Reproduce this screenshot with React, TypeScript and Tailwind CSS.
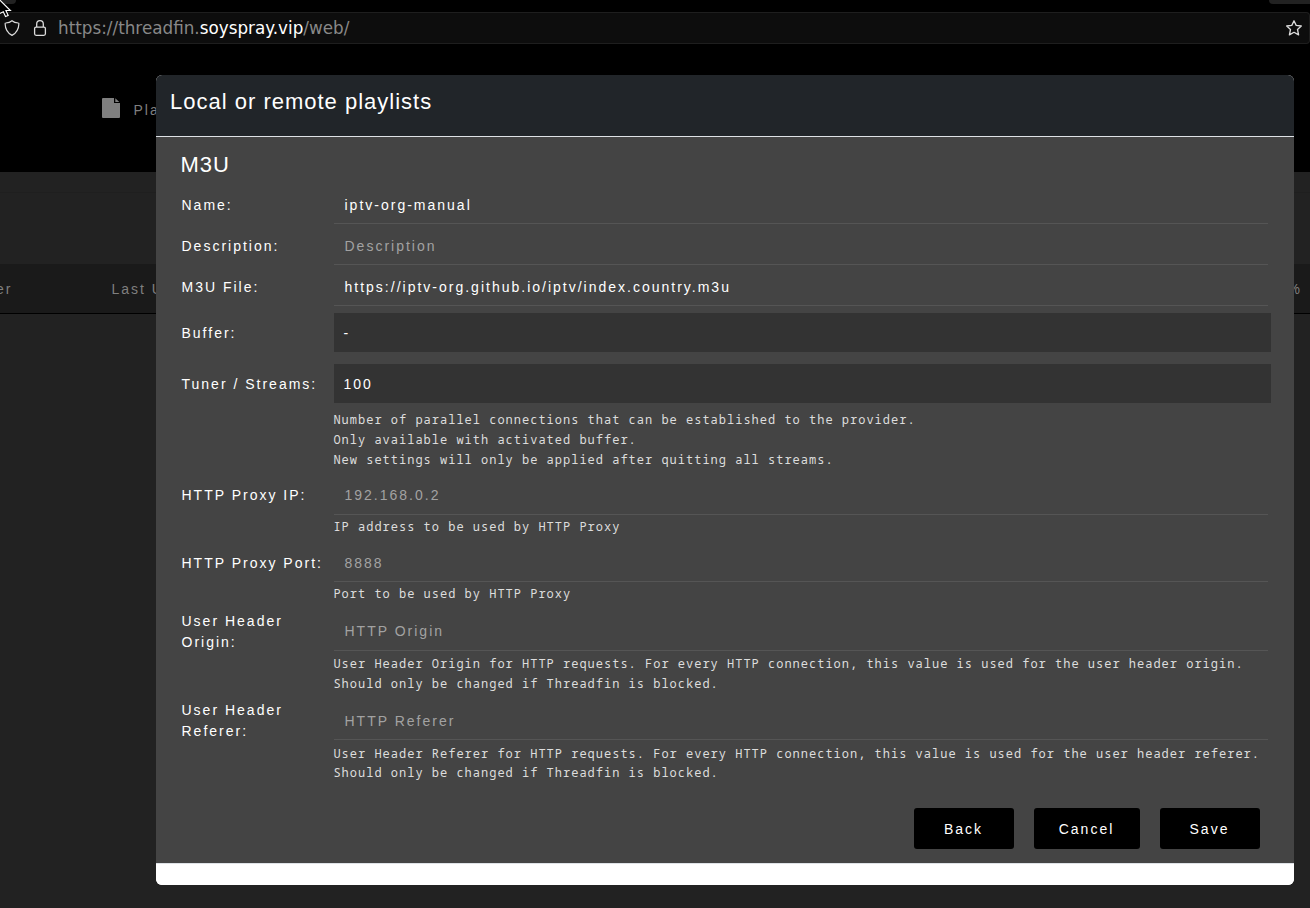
import React from "react";

type Field = {
  label: React.ReactNode;
  value?: string;
  placeholder?: string;
  select?: boolean;
  help?: string[];
  row: string;
  height: string;
  labelClass?: string;
  valueClass?: string;
  helpClass?: string;
};

const fields: Field[] = [
  { label: "Name:", value: "iptv-org-manual", row: "mt-0", height: "h-[37px]" },
  { label: "Description:", placeholder: "Description", row: "mt-1", height: "h-[37px]" },
  { label: "M3U File:", value: "https://iptv-org.github.io/iptv/index.country.m3u", row: "mt-1", height: "h-[37px]" },
  { label: "Buffer:", value: "-", select: true, row: "mt-[7px]", height: "h-[39px]", labelClass: "pt-[2px]", valueClass: "pt-[2px]" },
  {
    label: "Tuner / Streams:",
    value: "100",
    select: true,
    row: "mt-3",
    height: "h-[39px]",
    labelClass: "pt-[2px]",
    valueClass: "pt-[2px]",
    helpClass: "mt-[7px]",
    help: [
      "Number of parallel connections that can be established to the provider.",
      "Only available with activated buffer.",
      "New settings will only be applied after quitting all streams.",
    ],
  },
  {
    label: "HTTP Proxy IP:",
    placeholder: "192.168.0.2",
    row: "mt-[6px]",
    height: "h-[39px]",
    helpClass: "mt-[2px]",
    help: ["IP address to be used by HTTP Proxy"],
  },
  {
    label: "HTTP Proxy Port:",
    placeholder: "8888",
    row: "mt-[7px]",
    height: "h-[38px]",
    valueClass: "pt-[2px]",
    helpClass: "mt-[2px]",
    help: ["Port to be used by HTTP Proxy"],
  },
  {
    label: (<>User Header<br />Origin:</>),
    placeholder: "HTTP Origin",
    row: "mt-2",
    height: "h-[39px]",
    helpClass: "mt-[3px]",
    help: [
      "User Header Origin for HTTP requests. For every HTTP connection, this value is used for the user header origin.",
      "Should only be changed if Threadfin is blocked.",
    ],
  },
  {
    label: (<>User Header<br />Referer:</>),
    placeholder: "HTTP Referer",
    row: "mt-[7px]",
    height: "h-[39px]",
    valueClass: "pt-[2px]",
    helpClass: "mt-[4px] leading-[19px]",
    help: [
      "User Header Referer for HTTP requests. For every HTTP connection, this value is used for the user header referer.",
      "Should only be changed if Threadfin is blocked.",
    ],
  },
];

function FieldRow({ field }: { field: Field }) {
  return (
    <div className={`flex ${field.row}`}>
      <div className={`flex w-[152.5px] shrink-0 items-center leading-[21px] ${field.height} ${field.labelClass ?? ""}`}>
        <span>{field.label}</span>
      </div>
      <div className="w-[937px] shrink-0">
        {field.select ? (
          <div className={`flex items-center bg-[#333] pl-[9.5px] ${field.height} ${field.valueClass ?? ""}`}>{field.value}</div>
        ) : (
          <div className={`flex w-[934px] items-center border-b border-[#555] pl-[10.5px] ${field.height} ${field.valueClass ?? ""}`}>
            {field.value ? <span>{field.value}</span> : <span className="text-[#a2a2a2]">{field.placeholder}</span>}
          </div>
        )}
        {field.help && (
          <div className={`-ml-[0.6px] whitespace-nowrap font-['Noto_Sans_Mono','DejaVu_Sans_Mono',monospace] text-[12px] tracking-[1px] text-[#ddd] ${field.helpClass?.includes("leading") ? "" : "leading-[20px]"} ${field.helpClass}`}>
            {field.help.map((line) => (
              <p key={line}>{line}</p>
            ))}
          </div>
        )}
      </div>
    </div>
  );
}

function AddressBar() {
  return (
    <div className="h-11 bg-black">
      <div className="flex h-3 justify-between">
        <div className="h-[4px] w-4 rounded-br bg-[#222]" />
        <div className="h-[4px] w-[41px] rounded-bl bg-[#222]" />
      </div>
      <div className="flex h-8 items-center rounded-r border-y border-r border-[#1e1e1e] bg-[#0d0d0d]">
        <svg className="ml-[4px] h-4 w-4 shrink-0" viewBox="0 0 16 16" fill="none" stroke="#ddd" strokeWidth="1.2" strokeLinejoin="round">
          <path d="M8 .7C6.2 2.2 4 2.8 1.7 3c-.4 0-.6.3-.6.7C1.300 9.500 3.500 13 8 15.400 12.500 13 14.700 9.500 14.900 3.700c0-.4-.2-.7-.6-.7C12 2.800 9.800 2.200 8 .7Z" />
        </svg>
        <svg className="ml-3 h-4 w-4 shrink-0" viewBox="0 0 16 16" fill="none" stroke="#ddd" strokeWidth="1.3">
          <rect x="2.600" y="7.100" width="10.800" height="8.200" rx="1.500" />
          <path d="M4.700 7V4a3.300 3.300 0 0 1 6.600 0v3" />
        </svg>
        <div className="ml-[10px] flex-1 origin-left scale-y-[1.06] whitespace-nowrap font-['DejaVu_Sans',sans-serif] text-[16.8px] leading-5 text-[#888]">
          https://threadfin.<span className="text-white">soyspray.vip</span>/web/
        </div>
        <svg className="mr-[7px] h-4 w-4 shrink-0" viewBox="0 0 16 16" fill="none" stroke="#ddd" strokeWidth="1.3" strokeLinejoin="round">
          <path d="M8 .8 10.200 5.400 15.300 6 11.500 9.500 12.600 14.900 8 12.300 3.400 14.900 4.500 9.500.7 6l5.100-.6Z" />
        </svg>
      </div>
    </div>
  );
}

export default function App() {
  return (
    <div className="relative h-[908px] w-[1310px] overflow-hidden bg-[#222] font-['Liberation_Sans',Arial,sans-serif] text-[14px] tracking-[2px] text-white">
      <div className="tracking-normal">
        <AddressBar />
      </div>
      <div className="flex h-32 items-start bg-black pl-[102px] pt-[54px] text-[#7f7f7f]">
        <svg className="h-5 w-[18px]" viewBox="0 0 18 20" fill="#7f7f7f">
          <path d="M1 0h11v5h6v14a1 1 0 0 1-1 1H1a1 1 0 0 1-1-1V1a1 1 0 0 1 1-1ZM13.300.300 17.300 4h-4Z" />
        </svg>
        <span className="ml-[13.5px] mt-[2px] leading-5">Pla</span>
      </div>
      <div className="h-[92px] bg-[#222]">
        <div className="h-[21px] border-b border-[#1f1f1f]" />
      </div>
      <div className="flex h-[50px] items-center border-b border-black bg-[#1a1a1a] pt-[2px] text-[#7f7f7f]">
        <span className="-ml-[4px] w-[115.5px]">er</span>
        <span className="flex-1">Last U</span>
        <span className="mr-[8px]">%</span>
      </div>

      <svg className="absolute left-0 top-0 h-[18px] w-3" viewBox="0 0 12 18" fill="#000" stroke="#fff" strokeWidth="1.1">
        <path d="M-1-.8 10.400 10.500H5.900l2.300 4.900-2.700 1.200L3.300 11.700-3 15Z" />
      </svg>

      <div className="absolute left-[156px] top-[75px] flex h-[810px] w-[1138px] flex-col overflow-hidden rounded-[6px] bg-white">
        <header className="h-[62px] border-b border-[#dee2e6] bg-[#212529] pl-[14px] pt-[10px] text-[22px] leading-[33px] tracking-[1px]">
          Local or remote playlists
        </header>
        <main className="h-[726px] bg-[#444] pl-[25.5px] pt-[11px]">
          <h3 className="-ml-[1px] h-[39px] text-[22px] leading-[33px] tracking-[1px]">M3U</h3>
          {fields.map((field, i) => (
            <FieldRow key={i} field={field} />
          ))}
          <div className="mr-[34px] mt-[26px] flex justify-end gap-5">
            <button className="h-[41px] w-[100px] rounded-[3px] bg-black pr-px pt-[2px] tracking-[2px]">Back</button>
            <button className="h-[41px] w-[106px] rounded-[3px] bg-black pr-px pt-[2px] tracking-[2px]">Cancel</button>
            <button className="h-[41px] w-[100px] rounded-[3px] bg-black pr-px pt-[2px] tracking-[2px]">Save</button>
          </div>
        </main>
        <footer className="flex-1 border-t border-[#dee2e6] bg-white" />
      </div>
    </div>
  );
}
